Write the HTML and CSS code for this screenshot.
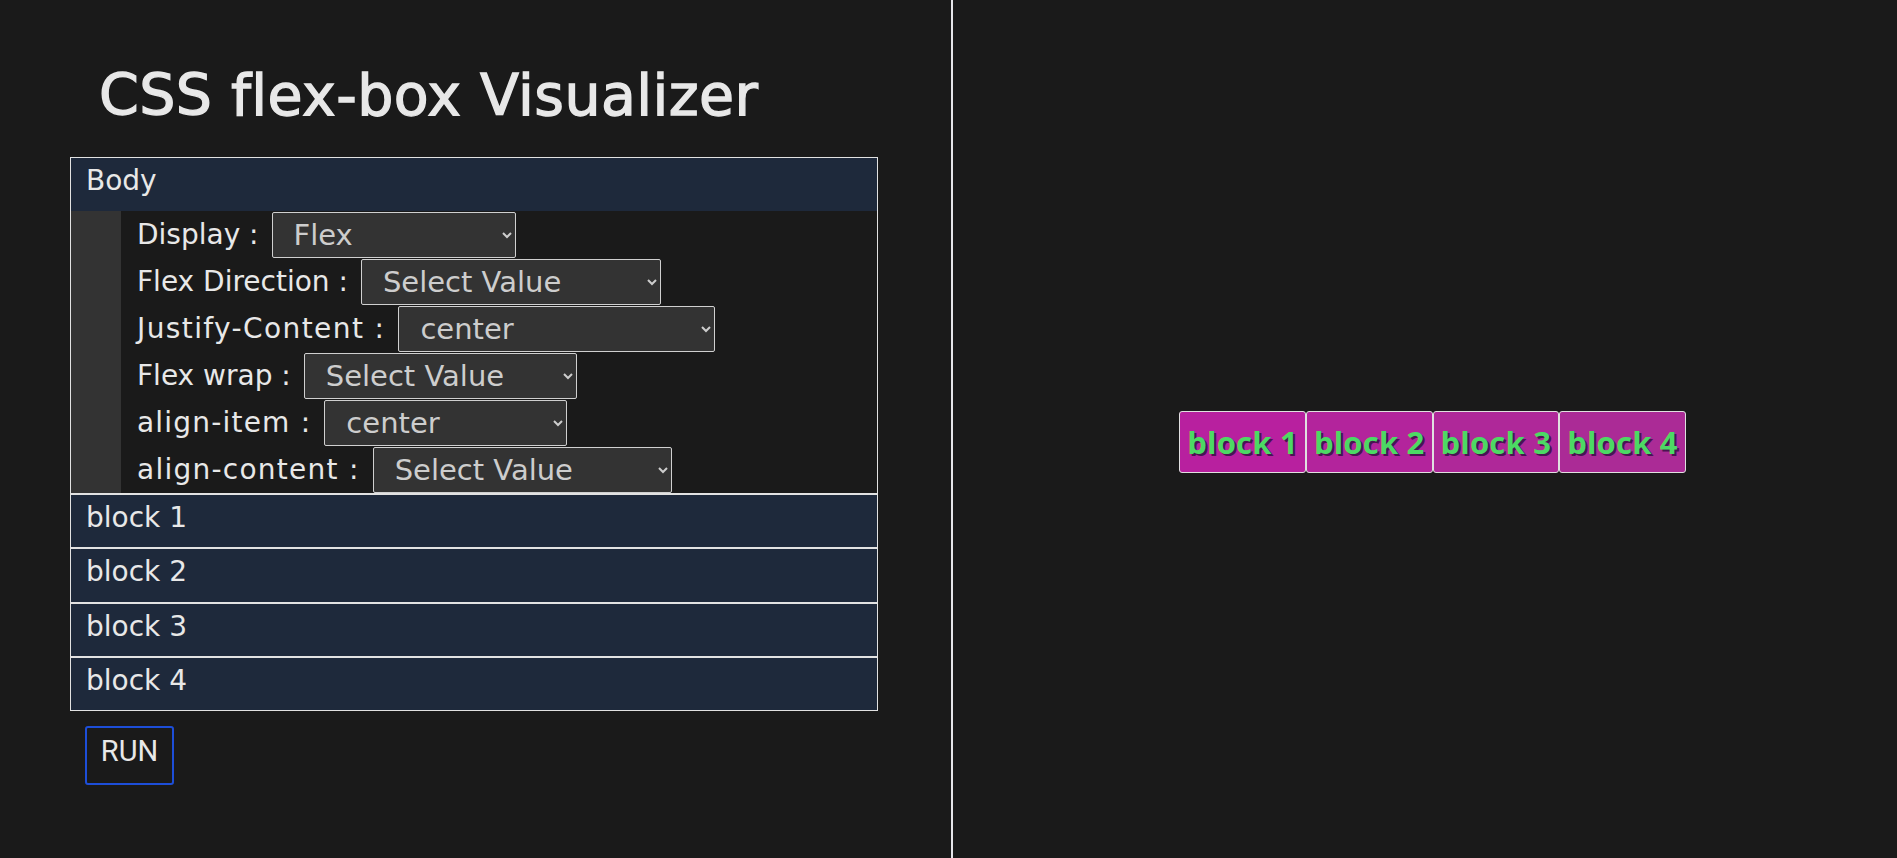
FILE: index.html
```html
<!DOCTYPE html>
<html lang="en">
<head>
<meta charset="utf-8">
<title>CSS flex-box Visualizer</title>
<link rel="stylesheet" href="styles.css">
</head>
<body>
<div class="page">
  <section class="editor">
    <h1 class="title">CSS flex-box Visualizer</h1>
    <div class="panel">
      <div class="section">
        <div class="section-head">Body</div>
        <div class="section-body">
          <div class="strip"></div>
          <div class="rows">
            <div class="row"><span class="label">Display :</span>
              <select class="sel sel-display"><option>Flex</option><option>Block</option></select></div>
            <div class="row"><span class="label">Flex Direction :</span>
              <select class="sel sel-direction"><option>Select Value</option><option>row</option><option>column</option></select></div>
            <div class="row"><span class="label label-justify">Justify-Content :</span>
              <select class="sel sel-justify"><option>center</option><option>flex-start</option><option>space-between</option></select></div>
            <div class="row"><span class="label">Flex wrap :</span>
              <select class="sel sel-wrap"><option>Select Value</option><option>wrap</option></select></div>
            <div class="row"><span class="label label-items">align-item :</span>
              <select class="sel sel-items"><option>center</option><option>stretch</option></select></div>
            <div class="row"><span class="label label-content">align-content :</span>
              <select class="sel sel-content"><option>Select Value</option><option>center</option></select></div>
          </div>
        </div>
      </div>
      <div class="section block-row">block 1</div>
      <div class="section block-row">block 2</div>
      <div class="section block-row">block 3</div>
      <div class="section block-row">block 4</div>
    </div>
    <button class="run">RUN</button>
  </section>
  <section class="preview">
    <div class="stage">
      <div class="block b1">block 1</div>
      <div class="block b2">block 2</div>
      <div class="block b3">block 3</div>
      <div class="block b4">block 4</div>
    </div>
  </section>
</div>
</body>
</html>
```
FILE: styles.css
```css
html, body {
  margin: 0;
  padding: 0;
  background: #1a1a1a;
}
body {
  font-family: "DejaVu Sans", sans-serif;
  color: #e8e8e8;
}
.page {
  display: flex;
  height: 858px;
}
.editor {
  width: 953px;
  border-right: 2px solid #e6e6ea;
  padding: 62px 0 0 70px;
  box-sizing: border-box;
}
.title {
  margin: 0 0 29px 29px;
  font-size: 57px;
  line-height: 66px;
  font-weight: 400;
  letter-spacing: 0.4px;
  color: #e8e8e8;
  -webkit-text-stroke: 1.3px #e8e8e8;
}
.panel {
  width: 808px;
}
.section {
  border: 1px solid #e2e2e2;
}
.section-head {
  background: #1e293b;
  font-size: 28px;
  line-height: 46px;
  padding: 0 0 7px 15px;
}
.section-body {
  display: flex;
}
.strip {
  width: 50px;
  background: #333333;
}
.rows {
  padding-left: 16px;
}
.row {
  display: flex;
  align-items: center;
  height: 47px;
}
.label {
  font-size: 28px;
  line-height: 46px;
  margin-right: 13px;
  white-space: nowrap;
}
.label-justify { letter-spacing: 1.4px; }
.label-items { letter-spacing: 1.2px; }
.label-content { letter-spacing: 1.25px; }
.sel {
  height: 46px;
  box-sizing: border-box;
  background-color: #333333;
  color: #cdcdcd;
  border: 1px solid #d0d0d0;
  border-radius: 2px;
  font-family: "DejaVu Sans", sans-serif;
  font-size: 29px;
  padding: 0 6px 0 17px;
}
.sel-display { width: 244px; }
.sel-direction { width: 300px; }
.sel-justify { width: 317px; }
.sel-wrap { width: 273px; }
.sel-items { width: 243px; }
.sel-content { width: 299px; }
.block-row {
  background: #1e293b;
  font-size: 28px;
  line-height: 46px;
  padding: 0 0 6.3px 15px;
}
.run {
  margin: 15px 0 0 15px;
  width: 89px;
  height: 59px;
  box-sizing: border-box;
  background: transparent;
  border: 2px solid #1d4ed8;
  border-radius: 3px;
  color: #e8e8e8;
  font-family: Roboto, sans-serif;
  font-size: 29px;
  padding: 0 0 9px 0;
}
.preview {
  flex: 1;
  display: flex;
  justify-content: center;
  align-items: center;
  padding: 26px 0 0 15px;
}
.stage {
  display: flex;
}
.block {
  border: 1px solid #e0e0e0;
  border-radius: 3px;
  font-family: "Open Sans", sans-serif;
  font-weight: 700;
  font-size: 31px;
  line-height: 60px;
  letter-spacing: 0.2px;
  padding: 0 7px;
  color: #4cd964;
  text-shadow: 2px 2px 0 #4a1352;
}
.b1 { background: #b8209f; }
.b2 { background: #b3249c; }
.b3 { background: #af2899; }
.b4 { background: #ab2b96; }
```
